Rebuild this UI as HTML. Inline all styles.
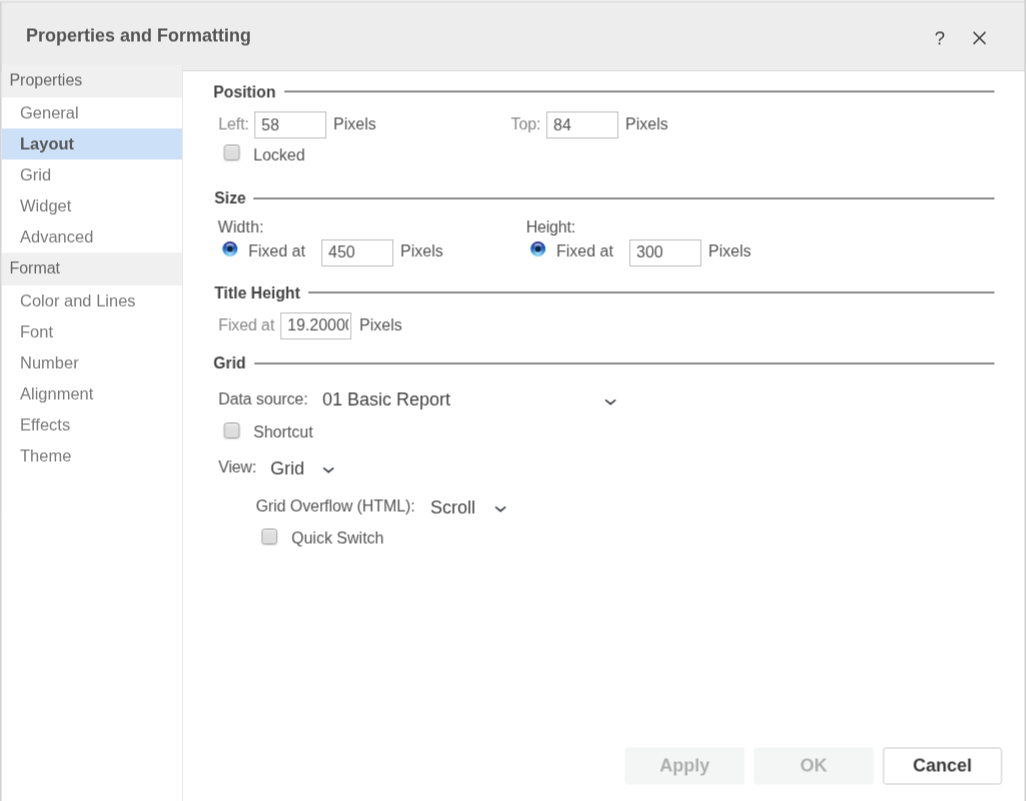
<!DOCTYPE html>
<html>
<head>
<meta charset="utf-8">
<title>Properties and Formatting</title>
<style>
html,body{margin:0;padding:0;}
body{width:1026px;height:801px;overflow:hidden;background:#fff;font-family:"Liberation Sans",Arial,sans-serif;position:relative;color:#555;}
.abs{position:absolute;white-space:nowrap;}
.wrap{left:0;top:0;width:1026px;height:801px;}
#w1{filter:url(#s1);}
#w2{filter:url(#s2);}
#frameL{left:0;top:2px;width:2px;height:799px;background:linear-gradient(to right,#d3d3d3 0,#d3d3d3 50%,rgba(200,200,200,0.45) 50%,rgba(200,200,200,0.45) 100%);}
#frameR{left:1024px;top:0;width:2px;height:801px;background:linear-gradient(to right,rgba(190,190,190,0.38) 0,rgba(190,190,190,0.38) 50%,#cfcfcf 50%,#cfcfcf 100%);}
#frameT{left:0;top:0;width:1026px;height:3px;background:linear-gradient(to bottom,#ececec 0,#ececec 33.3%,#e2e2e2 33.3%,#e2e2e2 66.6%,#e1e1e1 66.6%,#e1e1e1 100%);}
#hdr{left:0;top:0;width:1026px;height:70px;background:#ededed;border-bottom:1px solid #dedede;box-shadow:0 1px 0 #f4f4f4;}
#title{left:26px;top:24px;font-size:18px;font-weight:bold;color:#555;line-height:22px;}
#side{left:2px;top:64px;width:180px;height:737px;background:#fff;border-right:1px solid #e8e8e8;}
.sh{left:0;width:180px;height:32px;background:#f0f0f0;color:#666;font-size:16px;line-height:32px;text-indent:7.4px;}
.si{left:0;width:180px;height:31px;color:#7a7a7a;font-size:16.5px;line-height:31px;text-indent:18px;}
.si.sel{background:#cce0f8;color:#585858;font-weight:bold;}
.leg{font-size:15.8px;font-weight:bold;color:#444;line-height:20px;}
.line{height:2px;background:#8c8c8c;}
.lab{font-size:16px;letter-spacing:-0.12px;color:#888;line-height:20px;}
.txt{font-size:16px;color:#555;line-height:20px;}
.inp{width:70px;height:25px;border:1px solid #bdbdbd;background:#fff;font-size:16px;color:#555;line-height:24.5px;text-indent:6px;overflow:hidden;}
.cb{width:14px;height:14.4px;border:1.5px solid #a2a2a2;border-radius:3.2px;background:linear-gradient(#ececec,#dedede 35%,#dcdcdc);box-shadow:0 1px 1.5px rgba(0,0,0,0.12);transform-origin:0 0;}
.sel2{font-size:18px;color:#444;line-height:22px;}
.btn{height:37px;width:120px;font-size:18px;font-weight:bold;line-height:37px;text-align:center;border-radius:3px;}
.btn.dis{background:#f4f6f6;color:#aeaeae;}
.btn.en{background:#fff;border:1px solid #c8c8c8;color:#3a3a3a;width:117px;height:35px;line-height:35px;}
</style>
</head>
<body>
<svg width="0" height="0" style="position:absolute;left:0;top:0"><defs>
<filter id="s1" x="0" y="0" width="100%" height="100%" filterUnits="objectBoundingBox" color-interpolation-filters="sRGB"><feConvolveMatrix order="1 2" kernelMatrix="0.5 0.5" edgeMode="duplicate" preserveAlpha="false"/></filter>
<filter id="s2" x="0" y="0" width="100%" height="100%" filterUnits="objectBoundingBox" color-interpolation-filters="sRGB"><feConvolveMatrix order="2 2" kernelMatrix="0.3 0.2 0.3 0.2" edgeMode="duplicate" preserveAlpha="false"/></filter>
</defs></svg>
<div class="abs" id="hdr"></div>
<div class="abs wrap" id="w1">
<div class="abs" id="title">Properties and Formatting</div>
<div class="abs" style="left:934.5px;top:27px;font-size:19px;color:#3e3e3e;line-height:22px;">?</div>
<svg class="abs" style="left:972px;top:30px" width="15" height="15" viewBox="0 0 15 15"><path d="M1.5 1.5 L13.5 13.5 M13.5 1.5 L1.5 13.5" stroke="#3e3e3e" stroke-width="1.6" fill="none"/></svg>

<div class="abs" id="side">
  <div class="abs sh" style="top:0;height:33px;line-height:32px;">Properties</div>
  <div class="abs si" style="top:33px">General</div>
  <div class="abs si sel" style="top:64px">Layout</div>
  <div class="abs si" style="top:95px">Grid</div>
  <div class="abs si" style="top:126px">Widget</div>
  <div class="abs si" style="top:157px">Advanced</div>
  <div class="abs sh" style="top:188px;height:33px;">Format</div>
  <div class="abs si" style="top:221px">Color and Lines</div>
  <div class="abs si" style="top:252px">Font</div>
  <div class="abs si" style="top:283px">Number</div>
  <div class="abs si" style="top:314px">Alignment</div>
  <div class="abs si" style="top:345px">Effects</div>
  <div class="abs si" style="top:376px">Theme</div>
</div>

</div>
<div class="abs wrap" id="w2">
<!-- Position -->
<div class="abs leg" style="left:213px;top:82px">Position</div>
<div class="abs line" style="left:284px;top:90px;width:710px"></div>
<div class="abs lab" style="left:218px;top:114px">Left:</div>
<div class="abs inp" style="left:254px;top:111px;line-height:25.6px">58</div>
<div class="abs txt" style="left:333px;top:114px">Pixels</div>
<div class="abs lab" style="left:510.5px;top:114px">Top:</div>
<div class="abs inp" style="left:546px;top:111px;line-height:25.6px">84</div>
<div class="abs txt" style="left:625px;top:114px">Pixels</div>
<div class="abs cb" style="left:224px;top:144px;transform:translateX(-0.45px) scaleX(0.982)"></div>
<div class="abs txt" style="left:253px;top:145px">Locked</div>

<!-- Size -->
<div class="abs leg" style="left:214px;top:188px">Size</div>
<div class="abs line" style="left:253px;top:197px;width:741px"></div>
<div class="abs txt" style="left:217.5px;top:217px;letter-spacing:0.1px">Width:</div>
<svg class="abs radio" style="left:221px;top:240px" width="18" height="18" viewBox="0 0 18 18">
  <defs>
    <linearGradient id="rg" x1="0" y1="0" x2="0" y2="1"><stop offset="0" stop-color="#2a2487"/><stop offset="0.3" stop-color="#1a50b4"/><stop offset="0.6" stop-color="#2a7ad4"/><stop offset="1" stop-color="#6fc0f6"/></linearGradient>
    <radialGradient id="rb" cx="0.5" cy="0.78" r="0.42"><stop offset="0" stop-color="#b0e8ff" stop-opacity="0.95"/><stop offset="1" stop-color="#8fd4ff" stop-opacity="0"/></radialGradient>
    <linearGradient id="rh" x1="0" y1="0" x2="0" y2="1"><stop offset="0" stop-color="#ffffff" stop-opacity="0.7"/><stop offset="1" stop-color="#ffffff" stop-opacity="0.05"/></linearGradient>
  </defs>
  <g transform="translate(-0.35,-0.5)"><circle cx="9" cy="9" r="7.5" fill="url(#rg)"/>
  <circle cx="9" cy="9" r="7.5" fill="url(#rb)"/>
  <ellipse cx="9" cy="5.9" rx="3.9" ry="2.6" fill="url(#rh)"/>
  <circle cx="9" cy="9" r="2.9" fill="#14263a"/></g>
</svg>
<div class="abs txt" style="left:248px;top:241px">Fixed at</div>
<div class="abs inp" style="left:321px;top:239px">450</div>
<div class="abs txt" style="left:400px;top:241px">Pixels</div>
<div class="abs txt" style="left:525.7px;top:217px;letter-spacing:-0.2px">Height:</div>
<svg class="abs radio" style="left:529px;top:240px" width="18" height="18" viewBox="0 0 18 18">
  <g transform="translate(-0.35,-0.5)"><circle cx="9" cy="9" r="7.5" fill="url(#rg)"/>
  <circle cx="9" cy="9" r="7.5" fill="url(#rb)"/>
  <ellipse cx="9" cy="5.9" rx="3.9" ry="2.6" fill="url(#rh)"/>
  <circle cx="9" cy="9" r="2.9" fill="#14263a"/></g>
</svg>
<div class="abs txt" style="left:556px;top:241px">Fixed at</div>
<div class="abs inp" style="left:629px;top:239px">300</div>
<div class="abs txt" style="left:708px;top:241px">Pixels</div>

<!-- Title Height -->
<div class="abs leg" style="left:214px;top:283px">Title Height</div>
<div class="abs line" style="left:308px;top:291px;width:686px"></div>
<div class="abs lab" style="left:218px;top:315px">Fixed at</div>
<div class="abs inp" style="left:280px;top:312px;width:69.3px"><div style="overflow:hidden;width:66.5px;height:25px;">19.200000000000003</div></div>
<div class="abs txt" style="left:359px;top:315px">Pixels</div>

<!-- Grid -->
<div class="abs leg" style="left:213px;top:353px">Grid</div>
<div class="abs line" style="left:254px;top:362px;width:740px"></div>
<div class="abs txt" style="left:218px;top:389px;letter-spacing:-0.1px">Data source:</div>
<div class="abs sel2" style="left:322px;top:388px">01 Basic Report</div>
<svg class="abs" style="left:604px;top:397px" width="13" height="9" viewBox="0 0 13 9"><path d="M1.05 2.4 L6.15 6.5 L11.25 2.4" stroke="#464a50" stroke-width="1.8" fill="none"/></svg>
<div class="abs cb" style="left:224px;top:422px;transform:translateX(-0.45px) scaleX(0.982)"></div>
<div class="abs txt" style="left:253px;top:422px">Shortcut</div>
<div class="abs txt" style="left:218px;top:457px;letter-spacing:-0.17px">View:</div>
<div class="abs sel2" style="left:270px;top:457px">Grid</div>
<svg class="abs" style="left:322px;top:465px" width="13" height="9" viewBox="0 0 13 9"><path d="M1.05 2.4 L6.15 6.5 L11.25 2.4" stroke="#464a50" stroke-width="1.8" fill="none"/></svg>
<div class="abs txt" style="left:255.5px;top:496px;letter-spacing:-0.08px">Grid Overflow (HTML):</div>
<div class="abs sel2" style="left:430px;top:496px">Scroll</div>
<svg class="abs" style="left:494px;top:504px" width="13" height="9" viewBox="0 0 13 9"><path d="M1.05 2.4 L6.15 6.5 L11.25 2.4" stroke="#464a50" stroke-width="1.8" fill="none"/></svg>
<div class="abs cb" style="left:261px;top:528px;transform:translateX(0.2px) scaleX(0.982)"></div>
<div class="abs txt" style="left:291px;top:528px">Quick Switch</div>

<!-- Buttons -->
<div class="abs btn dis" style="left:624px;top:747px;transform:translateX(0.3px)">Apply</div>
<div class="abs btn dis" style="left:753px;top:747px;transform:translateX(0.3px)">OK</div>
<div class="abs btn en" style="left:883px;top:747px;transform:translateX(-0.4px)">Cancel</div>

</div>
<div class="abs" id="frameT"></div>
<div class="abs" id="frameL"></div>
<div class="abs" id="frameR"></div>
</body>
</html>
